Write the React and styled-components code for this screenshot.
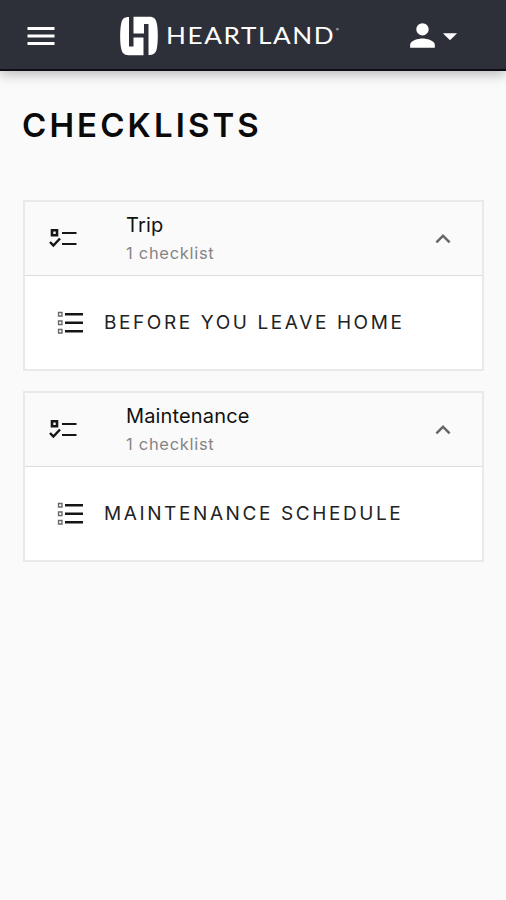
import React, { useState } from 'react';
import styled, { createGlobalStyle } from 'styled-components';
import { MdArrowDropDown, MdExpandLess, MdMenu, MdPerson } from 'react-icons/md';

const GlobalStyle = createGlobalStyle`
  * {
    box-sizing: border-box;
  }

  body {
    margin: 0;
    background-color: #fafafa;
    font-family: Inter, 'Liberation Sans', sans-serif;
    color: #111;
  }
`;

const Page = styled.div`
  min-height: 100vh;
`;

const TopBar = styled.header`
  display: grid;
  grid-template-columns: 119px 1fr 102px;
  align-items: center;
  height: 71px;
  background-color: #2d2f39;
  border-bottom: 2px solid #0e0f16;
  box-shadow: 0 3px 12px rgba(0, 0, 0, 0.28);
  color: white;
`;

const IconButton = styled.button`
  display: flex;
  align-items: center;
  padding: 0;
  border: none;
  background: none;
  color: inherit;
  cursor: pointer;
`;

const MenuButton = styled(IconButton)`
  padding: 2px 0 0 23px;
`;

const UserButton = styled(IconButton)`
  padding-top: 2px;

  svg + svg {
    margin-left: -8px;
  }
`;

const Brand = styled.div`
  display: flex;
  align-items: center;
  padding-top: 3px;
`;

const BrandName = styled.span`
  width: 149px;
  margin: 0 20px 0 7px;
  font-family: Lato, sans-serif;
  font-size: 22.5px;
  line-height: 30px;
  letter-spacing: 1.4px;
  transform: scaleX(1.16);
  transform-origin: left;
`;

const Trademark = styled.span`
  align-self: flex-start;
  margin: 11px 0 0 1px;
  font-size: 4px;
  line-height: 5px;
`;

const Content = styled.main`
  padding: 34px 22px 0 23px;
`;

const Title = styled.h1`
  margin: 0 0 55px -1px;
  color: #0a0a0a;
  font-size: 33px;
  font-weight: 600;
  line-height: 40px;
  letter-spacing: 3.1px;
`;

const Card = styled.section`
  margin-bottom: 20px;
  border: 2px solid #e9e9e9;
  background-color: white;
`;

const CardHeader = styled.button`
  display: flex;
  align-items: center;
  width: 100%;
  height: 74px;
  padding: 0 24px;
  border: none;
  border-bottom: 1px solid #dcdcdc;
  background-color: #fafafa;
  color: inherit;
  font-family: inherit;
  text-align: left;
  cursor: pointer;
`;

const CardText = styled.div`
  flex: 1;
  margin-left: 49px;
`;

const CardTitle = styled.div`
  font-size: 20px;
  line-height: 28px;
  letter-spacing: 0.15px;
`;

const CardCount = styled.div`
  font-size: 16.5px;
  line-height: 28px;
  letter-spacing: 0.7px;
  color: #858585;
`;

const Item = styled.div`
  display: flex;
  align-items: center;
  height: 93px;
  padding-left: 32px;
`;

const ItemName = styled.span`
  margin-left: 21px;
  color: #222;
  font-size: 19px;
  line-height: 28px;
  letter-spacing: 2.6px;
`;

const groups = [
  { title: 'Trip', items: ['BEFORE YOU LEAVE HOME'] },
  { title: 'Maintenance', items: ['MAINTENANCE SCHEDULE'] },
];

const Logo = () => (
  <svg width='40' height='40' viewBox='0 0 40 40' fill='white'>
    <path d='M10 1V30.5H14.5V21.5H24.5V39.2H9.5C5 39.2 3.2 37 2.3 33C.8 27 .8 13 2.3 7C3.2 3 5 1 10 1Z' />
    <path d='M14.5 .8H30.5C35 .8 36.8 3 37.7 7C39.2 13 39.2 27 37.7 33C36.8 37 34.5 39 29.5 39V8H25V17.5H14.5Z' />
  </svg>
);

const ChecksIcon = () => (
  <svg width='28' height='24' viewBox='0 0 28 24' fill='none' stroke='#151515'>
    <path d='M3 3.2H8V8.2H3Z' strokeWidth='2.6' />
    <path d='M1 15L4.4 18.5L11 11.5' strokeWidth='2.5' />
    <path d='M13 6H27.5M13 17H27.5' strokeWidth='2.2' />
  </svg>
);

const ListIcon = () => (
  <svg width='26' height='24' viewBox='0 0 26 24' fill='none' stroke='#151515'>
    <path d='M1.5 1.5H5V5H1.5ZM1.5 10H5V13.5H1.5ZM1.5 18.5H5V22H1.5Z' stroke='#666' strokeWidth='1.3' />
    <path d='M8 3.3H26M8 11.8H26M8 20.3H26' strokeWidth='2.4' />
  </svg>
);

const Group = ({ group }) => {
  const [open, setOpen] = useState(true);

  return (
    <Card>
      <CardHeader onClick={() => setOpen(!open)}>
        <ChecksIcon />
        <CardText>
          <CardTitle>{group.title}</CardTitle>
          <CardCount>{group.items.length} checklist</CardCount>
        </CardText>
        <MdExpandLess size={30} color='#666' />
      </CardHeader>
      {open &&
        group.items.map((name) => (
          <Item key={name}>
            <ListIcon />
            <ItemName>{name}</ItemName>
          </Item>
        ))}
    </Card>
  );
};

const App = () => {
  return (
    <>
      <GlobalStyle />
      <Page>
        <TopBar>
          <MenuButton aria-label='Menu'>
            <MdMenu size={36} />
          </MenuButton>
          <Brand>
            <Logo />
            <BrandName>HEARTLAND</BrandName>
            <Trademark>®</Trademark>
          </Brand>
          <UserButton aria-label='Account'>
            <MdPerson size={37} />
            <MdArrowDropDown size={34} />
          </UserButton>
        </TopBar>
        <Content>
          <Title>CHECKLISTS</Title>
          {groups.map((group) => (
            <Group key={group.title} group={group} />
          ))}
        </Content>
      </Page>
    </>
  );
};

export default App;
